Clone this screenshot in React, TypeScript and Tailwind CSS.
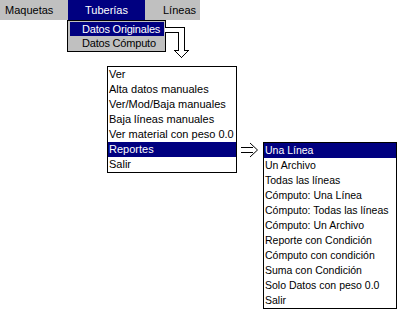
import React from "react";

const font = { fontFamily: '"Liberation Sans", Arial, sans-serif' };

const mainItems = [
  "Ver",
  "Alta datos manuales",
  "Ver/Mod/Baja manuales",
  "Baja líneas manuales",
  "Ver material con peso 0.0",
  "Reportes",
  "Salir",
];

const subItems = [
  "Una Línea",
  "Un Archivo",
  "Todas las líneas",
  "Cómputo: Una Línea",
  "Cómputo: Todas las líneas",
  "Cómputo: Un Archivo",
  "Reporte con Condición",
  "Cómputo con condición",
  "Suma con Condición",
  "Solo Datos con peso 0.0",
  "Salir",
];

export default function App() {
  return (
    <div className="relative w-[398px] h-[310px] bg-white overflow-hidden text-black" style={font}>
      {/* Menu bar */}
      <div className="flex w-[200px] h-[20px] bg-[#c0c0c0] text-[11px] leading-[20px]">
        <div className="w-[68px] pl-[5px]">Maquetas</div>
        <div className="w-[77px] bg-[#000080] text-white text-center">Tuberías</div>
        <div className="w-[55px] pl-[18px]">Líneas</div>
      </div>

      {/* First dropdown */}
      <div className="absolute left-[67px] top-[20px] w-[99px] h-[32px] border border-black bg-[#c0c0c0] p-[1px] text-[11px] tracking-[-0.2px] whitespace-nowrap">
        <div className="h-[14px] leading-[14px] bg-[#000080] text-white pl-[12px] ml-[1px]">Datos Originales</div>
        <div className="h-[14px] leading-[14px] pl-[13px]">Datos Cómputo</div>
      </div>

      {/* Bent arrow */}
      <svg className="absolute left-[165px] top-[25px]" width="30" height="40" viewBox="0 0 30 40">
        <path
          d="M0 2.5 H19.5 V25.5 H23.5 L16.5 32.5 L9.5 25.5 H13.5 V7.5 H0"
          fill="white"
          stroke="black"
          strokeWidth="1"
          shapeRendering="crispEdges"
        />
      </svg>

      {/* Main submenu */}
      <div className="absolute left-[107px] top-[66px] w-[130px] border border-black bg-white text-[11px]">
        {mainItems.map((t) => (
          <div
            key={t}
            className={
              "h-[15px] leading-[15px] pl-[1px] whitespace-nowrap " +
              (t === "Reportes" ? "bg-[#000080] text-white" : "")
            }
          >
            {t}
          </div>
        ))}
      </div>

      {/* Double arrow */}
      <svg className="absolute left-[238px] top-[142px]" width="25" height="17" viewBox="0 0 25 17">
        <path d="M3 5.5 H15 M3 10.5 H15" stroke="black" strokeWidth="1" shapeRendering="crispEdges" fill="none" />
        <path d="M12 1 L19.5 8 L12 15" stroke="black" strokeWidth="1" fill="none" />
      </svg>

      {/* Reportes submenu */}
      <div className="absolute left-[263px] top-[142px] w-[134px] border border-black bg-white text-[10.5px]">
        {subItems.map((t, i) => (
          <div
            key={i}
            className={
              "h-[15px] leading-[15px] pl-[1px] whitespace-nowrap " +
              (i === 0 ? "bg-[#000080] text-white" : "")
            }
          >
            {t}
          </div>
        ))}
      </div>
    </div>
  );
}
